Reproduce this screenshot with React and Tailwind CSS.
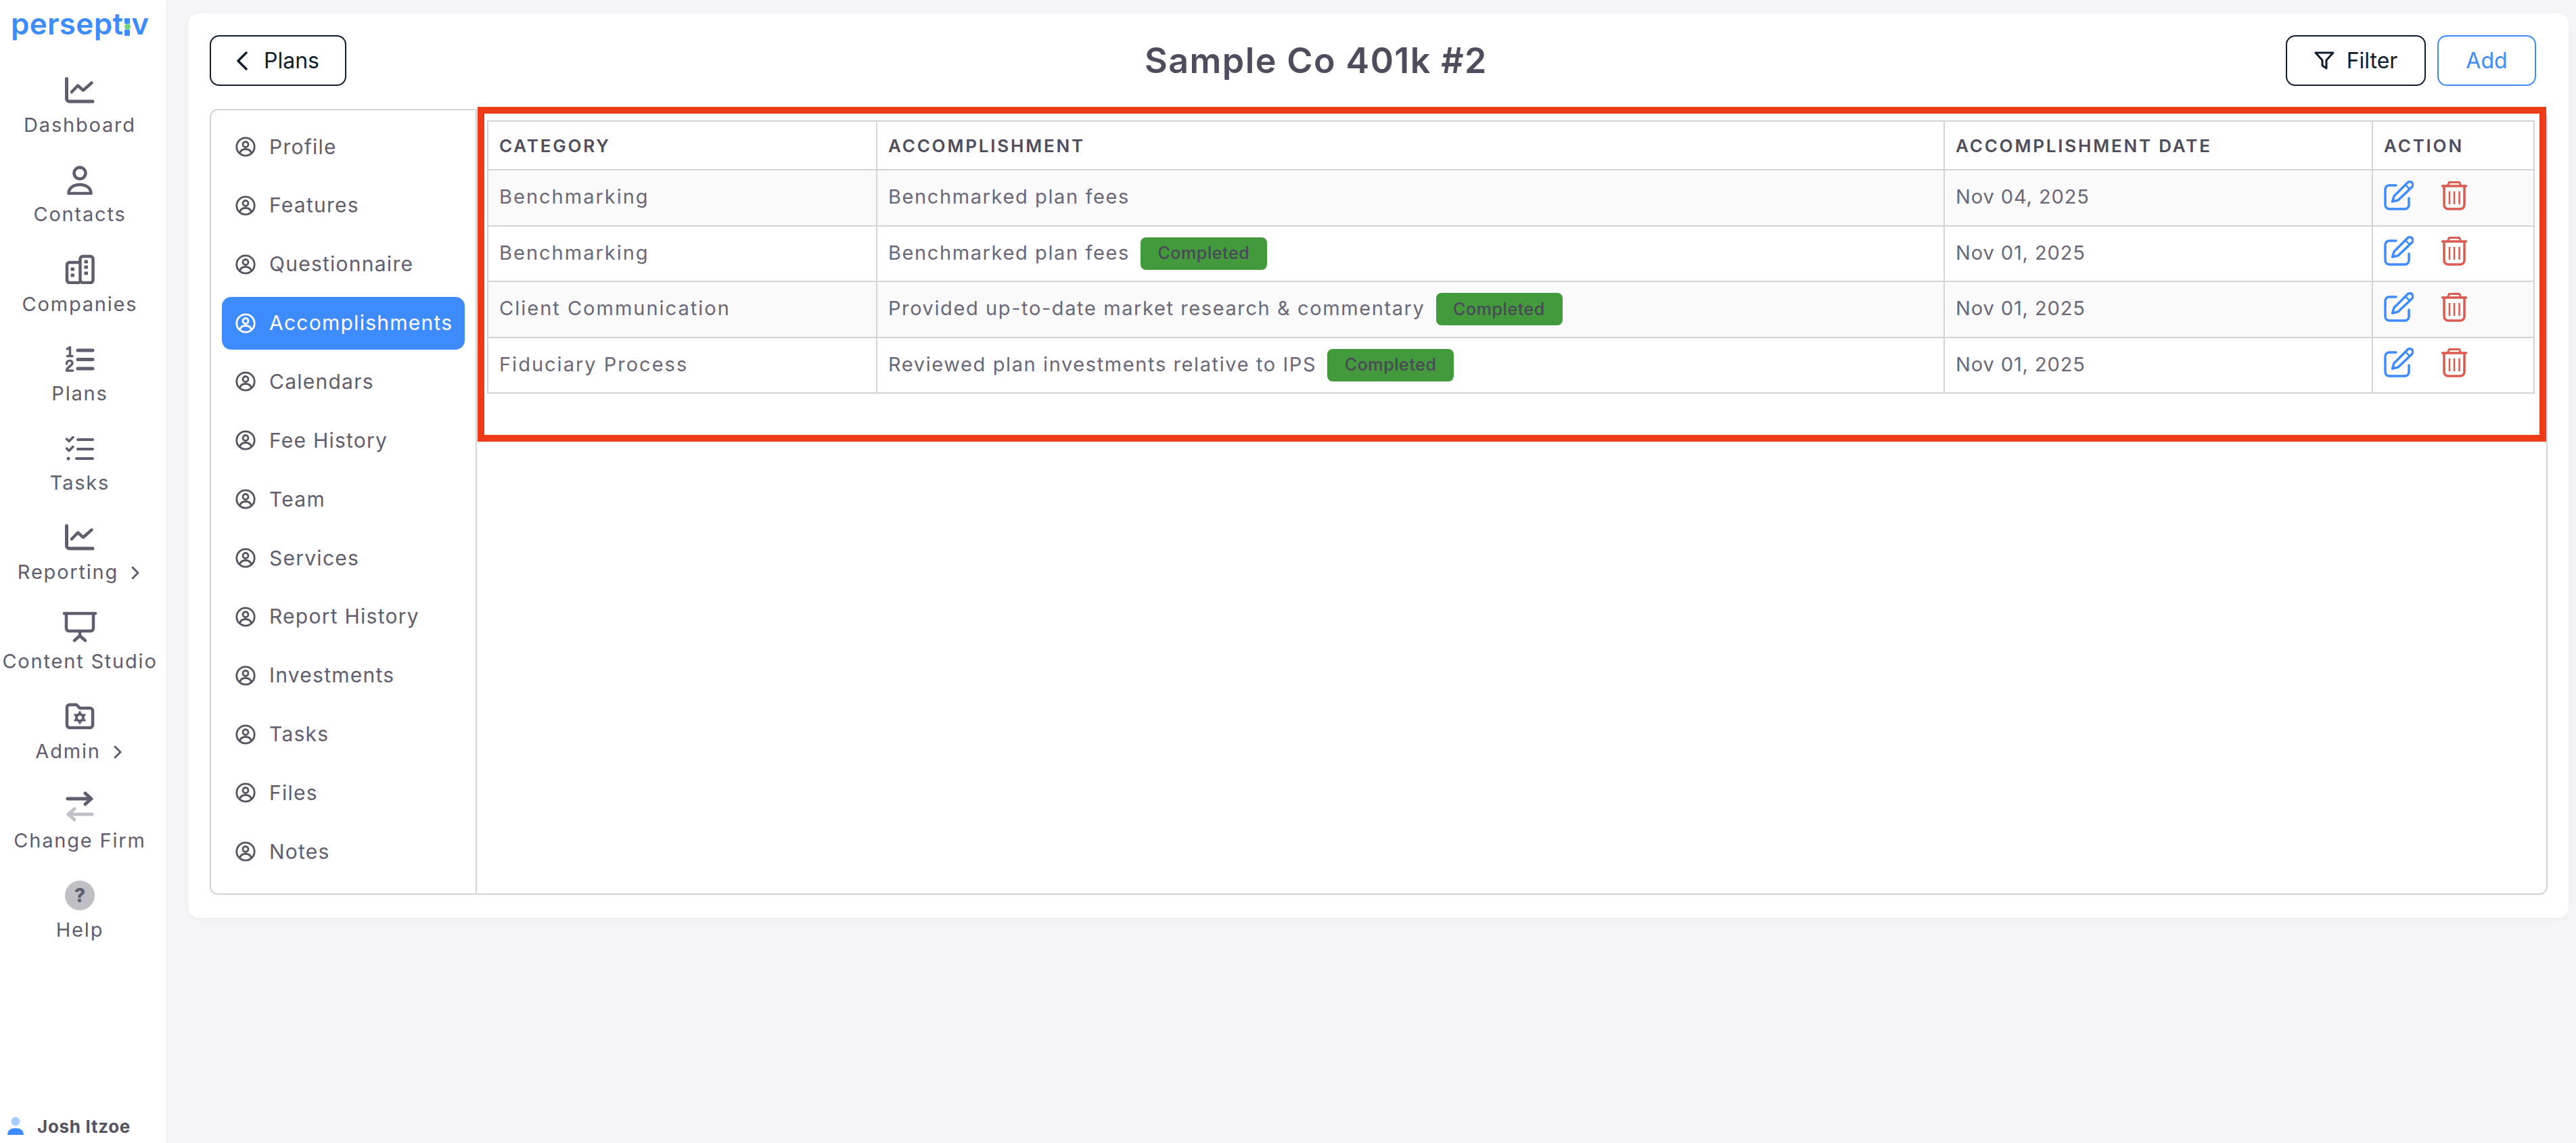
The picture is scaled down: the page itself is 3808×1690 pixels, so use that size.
import React from "react";

const ChartIcon = () => (
  <svg width="44" height="40" viewBox="0 0 44 40" fill="none" stroke="#5f5d6e" strokeWidth="5" strokeLinecap="round" strokeLinejoin="round">
    <path d="M2.5 2.5V32a4 4 0 0 0 4 4H41" />
    <path d="M10 22L19 12.5L27 19.5L39.5 8.5" strokeWidth="4.5" />
  </svg>
);

const PersonIcon = () => (
  <svg width="44" height="44" viewBox="0 0 44 44" fill="none" stroke="#5f5d6e" strokeWidth="4.5" strokeLinejoin="round">
    <circle cx="22" cy="12" r="8.5" />
    <path d="M5.5 42c0-8 7-13 16.5-13s16.5 5 16.5 13z" />
  </svg>
);

const CompaniesIcon = () => (
  <svg width="44" height="44" viewBox="0 0 44 44" fill="none" stroke="#5f5d6e" strokeWidth="4.5" strokeLinejoin="round">
    <rect x="22.5" y="3" width="19" height="39" rx="4" />
    <path d="M22 12H7a4 4 0 0 0-4 4v22a4 4 0 0 0 4 4h15" />
    <g fill="#5f5d6e" stroke="none">
      <rect x="28.5" y="8.5" width="5.5" height="5" rx="1" />
      <rect x="28.5" y="16.5" width="5.5" height="5" rx="1" />
      <rect x="28.5" y="25.5" width="5.5" height="5" rx="1" />
      <rect x="8.5" y="19.5" width="5.5" height="5" rx="1" />
      <rect x="8.5" y="28.5" width="5.5" height="5" rx="1" />
    </g>
  </svg>
);

const PlansIcon = () => (
  <svg width="44" height="40" viewBox="0 0 44 40" fill="none" stroke="#5f5d6e" strokeWidth="5" strokeLinecap="round" strokeLinejoin="round">
    <path d="M19 7H41M19 20.5H41M19 34H41" />
    <path d="M3.5 5L7.5 2.5V15M3.5 15.5H11" strokeWidth="3.5" />
    <path d="M2.5 27c0-6 8.5-6 8.5-1c0 3.5-8.5 6-8.5 11H11.5" strokeWidth="3.5" />
  </svg>
);

const TasksIcon = () => (
  <svg width="44" height="36" viewBox="0 0 44 36" fill="none" stroke="#5f5d6e" strokeWidth="4" strokeLinecap="round" strokeLinejoin="round">
    <path d="M19 5H41M19 19H41M17 33H41" />
    <path d="M2.5 4l3.5 3.5L12 1.5M2.5 18l3.5 3.5L12 15.5" strokeWidth="3.5" />
    <circle cx="5" cy="33" r="2.5" fill="#5f5d6e" stroke="none" />
  </svg>
);

const StudioIcon = () => (
  <svg width="52" height="46" viewBox="0 0 52 46" fill="none" stroke="#5f5d6e" strokeWidth="4.5" strokeLinecap="round" strokeLinejoin="round">
    <path d="M3 3H49" />
    <path d="M6 5V25a4 4 0 0 0 4 4H42a4 4 0 0 0 4-4V5" />
    <path d="M26 29V36M18 43L26 36L34 43" />
  </svg>
);

const AdminIcon = () => (
  <svg width="44" height="40" viewBox="0 0 44 40" fill="none" stroke="#5f5d6e" strokeWidth="4.5" strokeLinecap="round" strokeLinejoin="round">
    <path d="M3 7a4 4 0 0 1 4-4H17L22 8H37a4 4 0 0 1 4 4V33a4 4 0 0 1-4 4H7a4 4 0 0 1-4-4Z" />
    <circle cx="22" cy="22" r="5" strokeWidth="4" />
    <path d="M22 14V15M22 29V30M15 18L16 18.500M28 25.500L29 26M15 26L16 25.500M28 18.500L29 18" strokeWidth="3.500" />
  </svg>
);

const ChangeFirmIcon = () => (
  <svg width="44" height="48" viewBox="0 0 44 48" fill="none" strokeWidth="5" strokeLinecap="round" strokeLinejoin="round">
    <path d="M4 13H39M30 5L39 13L30 21" stroke="#5f5d6e" />
    <path d="M40 36H5M14 28L5 36L14 44" stroke="#c1c0c8" />
  </svg>
);

const Chevron = () => (
  <svg width="16" height="20" viewBox="0 0 16 20" fill="none" stroke="#5f5d6e" strokeWidth="3" strokeLinecap="round" strokeLinejoin="round" className="mt-[3px]">
    <path d="M2 2L10 10L2 18" />
  </svg>
);

const UserCircle = ({ color }) => (
  <svg width="30" height="30" viewBox="0 0 30 30" fill="none" stroke={color} strokeWidth="2.8" strokeLinecap="round" className="shrink-0">
    <circle cx="15" cy="15" r="13.2" />
    <circle cx="15" cy="11.500" r="4" />
    <path d="M6.500 24.500c1-4 4.500-6 8.500-6s7.500 2 8.500 6" />
  </svg>
);

const EditIcon = () => (
  <svg width="44" height="44" viewBox="0 0 44 44" fill="none" stroke="#3d8bfd" strokeWidth="3.500" strokeLinecap="round" strokeLinejoin="round">
    <path d="M18 7H8a6 6 0 0 0-6 6V36a6 6 0 0 0 6 6H31a6 6 0 0 0 6-6V26" />
    <path d="M12.500 31L15 23L35 3a4.500 4.500 0 0 1 6.500 6.500L21 29Z" />
    <path d="M32 6.500L38 12.500" strokeWidth="2.500" />
  </svg>
);

const TrashIcon = () => (
  <svg width="38" height="44" viewBox="0 0 38 44" fill="none" stroke="#dc5b50" strokeWidth="3.500" strokeLinecap="round" strokeLinejoin="round">
    <path d="M1.500 8H36.500" />
    <path d="M9 8L11.500 2.500H26.500L29 8" strokeWidth="3" />
    <path d="M4 8V36a6 6 0 0 0 6 6H28a6 6 0 0 0 6-6V8" />
    <path d="M12 16V35M19 16V35M26.500 16V35" strokeWidth="2.500" strokeLinecap="butt" />
  </svg>
);

const sidebarItems = [
  { label: "Dashboard", icon: <ChartIcon /> },
  { label: "Contacts", icon: <PersonIcon /> },
  { label: "Companies", icon: <CompaniesIcon /> },
  { label: "Plans", icon: <PlansIcon /> },
  { label: "Tasks", icon: <TasksIcon /> },
  { label: "Reporting", icon: <ChartIcon />, arrow: true },
  { label: "Content Studio", icon: <StudioIcon /> },
  { label: "Admin", icon: <AdminIcon />, arrow: true },
  { label: "Change Firm", icon: <ChangeFirmIcon /> },
  {
    label: "Help",
    icon: (
      <div className="flex h-[44px] w-[44px] items-center justify-center rounded-full bg-[#c0bfc6] text-[28px] font-extrabold text-[#5f5d6e]">
        ?
      </div>
    ),
  },
];

const planTabs = [
  "Profile",
  "Features",
  "Questionnaire",
  "Accomplishments",
  "Calendars",
  "Fee History",
  "Team",
  "Services",
  "Report History",
  "Investments",
  "Tasks",
  "Files",
  "Notes",
];

const rows = [
  { category: "Benchmarking", text: "Benchmarked plan fees", date: "Nov 04, 2025" },
  { category: "Benchmarking", text: "Benchmarked plan fees", date: "Nov 01, 2025", done: true },
  { category: "Client Communication", text: "Provided up-to-date market research & commentary", date: "Nov 01, 2025", done: true },
  { category: "Fiduciary Process", text: "Reviewed plan investments relative to IPS", date: "Nov 01, 2025", done: true },
];

const Sidebar = () => (
  <aside className="flex h-full w-[246px] shrink-0 flex-col bg-white pr-[10px] shadow-[2px_0_6px_rgba(0,0,0,0.03)]">
    <div className="flex h-[112px] items-start pl-[16px] pt-[7px] text-[44px] leading-[56px] font-semibold tracking-[0.3px] text-[#3d8bfd]">
      <span>persept</span>
      <span className="mx-[2px] mt-[20px] flex w-[8px] flex-col items-center">
        <span className="h-[8px] w-[8px] bg-[#3d8bfd]" />
        <span className="h-[9px] w-[9px] rounded-full bg-[#6fd47f]" />
        <span className="h-[9px] w-[8px] bg-[#3d8bfd]" />
      </span>
      <span>v</span>
    </div>
    {sidebarItems.map((item) => (
      <div key={item.label} className="flex h-[132.200px] flex-col items-center">
        <div className="flex h-[44px] items-center justify-center">{item.icon}</div>
        <div className="mt-[11px] flex h-[36px] items-center text-[29px] tracking-[1.800px] whitespace-nowrap text-[#5f5d6e]">
          <span>{item.label}</span>
          {item.arrow && (
            <span className="ml-[19px] flex">
              <Chevron />
            </span>
          )}
        </div>
      </div>
    ))}
    <div className="mt-auto flex h-[48px] items-center gap-[20px] pl-[11px] pb-[2px]">
      <svg width="24" height="28" viewBox="0 0 24 28">
        <circle cx="12" cy="7" r="6.500" fill="#a9ccff" />
        <path d="M0 27c0-7 5-10 12-10s12 3 12 10z" fill="#3d8bfd" />
      </svg>
      <span className="text-[26px] font-bold tracking-[0.7px] text-[#55535f]">Josh Itzoe</span>
    </div>
  </aside>
);

const PlanTabs = () => (
  <nav className="flex w-[393px] shrink-0 flex-col gap-[8.870px] border-r-2 border-[#d4d4d8] px-[16px] pt-[15px]">
    {planTabs.map((tab) => {
      const active = tab === "Accomplishments";
      return (
        <div
          key={tab}
          className={
            active
              ? "flex h-[78px] items-center gap-[20px] rounded-[14px] bg-[#3d8bfd] px-[20px] text-[30px] tracking-[1.250px] whitespace-nowrap text-white"
              : "flex h-[78px] items-center gap-[20px] rounded-[14px] px-[20px] text-[30px] tracking-[1.250px] whitespace-nowrap text-[#5f5d6e]"
          }
        >
          <UserCircle color={active ? "#ffffff" : "#55535f"} />
          <span>{tab}</span>
        </div>
      );
    })}
  </nav>
);

const AccomplishmentsTable = () => (
  <table className="w-[3025px] table-fixed border-collapse border-2 border-[#d4d4d8] text-[29px] text-[#6a6878]">
    <colgroup>
      <col className="w-[575px]" />
      <col className="w-[1578px]" />
      <col className="w-[633px]" />
      <col className="w-[239px]" />
    </colgroup>
    <thead>
      <tr className="h-[72px]">
        {["CATEGORY", "ACCOMPLISHMENT", "ACCOMPLISHMENT DATE", "ACTION"].map((head) => (
          <th key={head} className="border-2 border-[#d4d4d8] px-[16px] text-left text-[26px] font-semibold tracking-[2.800px] text-[#4f4d5d]">
            {head}
          </th>
        ))}
      </tr>
    </thead>
    <tbody>
      {rows.map((row, i) => (
        <tr key={i} className={i % 2 === 0 ? "h-[82.500px] bg-[#fafafa]" : "h-[82.500px] bg-white"}>
          <td className="border-2 border-[#d4d4d8] px-[16px] pb-[3px] tracking-[2px]">{row.category}</td>
          <td className="border-2 border-[#d4d4d8] px-[16px] tracking-[1.600px]">
            <div className="flex items-center gap-[16px]">
              <span className="mb-[3px]">{row.text}</span>
              {row.done && (
                <span className="flex h-[48px] w-[187px] items-center justify-center rounded-[8px] bg-[#439a3c] text-[25px] font-medium tracking-[0.6px] text-[#4a4858]">
                  Completed
                </span>
              )}
            </div>
          </td>
          <td className="border-2 border-[#d4d4d8] px-[16px] pb-[3px] tracking-[0.900px]">{row.date}</td>
          <td className="border-2 border-[#d4d4d8] px-[16px]">
            <div className="-mt-[7px] flex items-center gap-[41px]">
              <EditIcon />
              <TrashIcon />
            </div>
          </td>
        </tr>
      ))}
    </tbody>
  </table>
);

export default function App() {
  return (
    <div className="flex h-[1690px] w-[3808px] overflow-hidden bg-[#f5f5f8] font-[Inter,sans-serif]">
      <Sidebar />
      <main className="mt-[20px] mr-[11px] ml-[32px] flex h-[1337px] flex-1 flex-col rounded-[16px] bg-white pt-[32px] pr-[31px] pb-[34px] pl-[32px] shadow-[0_2px_10px_rgba(0,0,0,0.04)]">
        <header className="mb-[34px] flex h-[75px] items-center justify-between pr-[17px]">
          <button className="flex h-[75px] w-[202px] items-center justify-center gap-[24px] rounded-[14px] border-2 border-[#0f1d2f] text-[32px] text-[#0f1d2f]">
            <svg width="16" height="28" viewBox="0 0 16 28" fill="none" stroke="#0f1d2f" strokeWidth="3.500" strokeLinecap="round" strokeLinejoin="round">
              <path d="M14 2L2 14L14 26" />
            </svg>
            Plans
          </button>
          <h1 className="text-[52px] font-semibold tracking-[1.400px] text-[#4f4d5d]">Sample Co 401k #2</h1>
          <div className="flex gap-[17px]">
            <button className="flex h-[75px] w-[207px] items-center justify-center gap-[18px] rounded-[14px] border-2 border-[#0f1d2f] text-[32px] text-[#0f1d2f]">
              <svg width="30" height="27" viewBox="0 0 30 27" fill="none" stroke="#0f1d2f" strokeWidth="3" strokeLinecap="round" strokeLinejoin="round">
                <path d="M2 2H28L18 13V25L12 21V13Z" />
              </svg>
              Filter
            </button>
            <button className="flex h-[75px] w-[146px] items-center justify-center rounded-[14px] border-2 border-[#3d8bfd] text-[32px] text-[#3d8bfd]">
              Add
            </button>
          </div>
        </header>
        <section className="flex flex-1 rounded-[12px] border-2 border-[#d4d4d8]">
          <PlanTabs />
          <div className="relative flex-1 pt-[15px] pl-[15px]">
            <AccomplishmentsTable />
            {/* Red annotation over the table */}
            <div className="pointer-events-none absolute -top-[5px] left-[1px] h-[495px] w-[3058px] border-[10px] border-[#ec3b16]" />
          </div>
        </section>
      </main>
    </div>
  );
}
